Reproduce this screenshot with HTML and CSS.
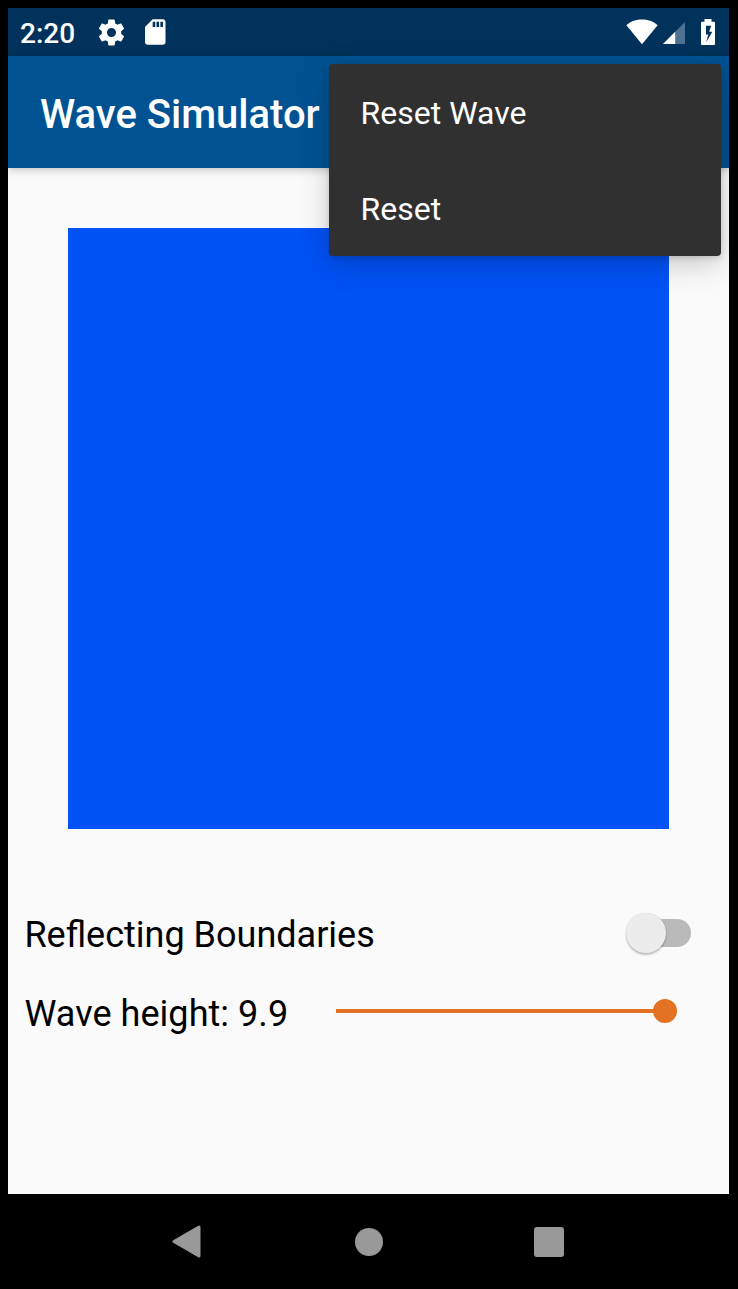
FILE: index.html
```html
<!DOCTYPE html>
<html lang="en">
<head>
<meta charset="utf-8">
<title>Wave Simulator</title>
<link rel="stylesheet" href="styles.css">
</head>
<body>
<div class="screen">
  <header class="status-bar">
    <span class="clock">2:20</span>
    <svg class="gear" viewBox="0 0 24 24"><path d="M19.43 12.98c.04-.32.07-.64.07-.98s-.03-.66-.07-.98l2.11-1.65c.19-.15.24-.42.12-.64l-2-3.46c-.12-.22-.39-.3-.61-.22l-2.49 1c-.52-.4-1.08-.73-1.69-.98l-.38-2.65C14.46 2.18 14.25 2 14 2h-4c-.25 0-.46.18-.49.42l-.38 2.65c-.61.25-1.17.59-1.69.98l-2.49-1c-.23-.09-.49 0-.61.22l-2 3.46c-.13.22-.07.49.12.64l2.11 1.65c-.04.32-.07.65-.07.98s.03.66.07.98l-2.11 1.65c-.19.15-.24.42-.12.64l2 3.46c.12.22.39.3.61.22l2.49-1c.52.4 1.08.73 1.69.98l.38 2.65c.03.24.24.42.49.42h4c.25 0 .46-.18.49-.42l.38-2.65c.61-.25 1.17-.59 1.69-.98l2.49 1c.23.09.49 0 .61-.22l2-3.46c.12-.22.07-.49-.12-.64l-2.11-1.65zM12 15.5c-1.93 0-3.5-1.57-3.5-3.5s1.57-3.5 3.5-3.5 3.5 1.57 3.5 3.5-1.57 3.5-3.5 3.5z"/></svg>
    <svg class="sd-card" viewBox="4 2 16 20"><path d="M18 2h-8L4.02 8 4 20c0 1.1.9 2 2 2h12c1.1 0 2-.9 2-2V4c0-1.1-.9-2-2-2zm-6 6h-2V4h2v4zm3 0h-2V4h2v4zm3 0h-2V4h2v4z"/></svg>
    <svg class="wifi" viewBox="0 0 32 26"><path d="M16 25.300.4 6.200C5 2 10.500.400 16 .400S27 2 31.600 6.200Z"/></svg>
    <svg class="signal" viewBox="0 0 22 22"><path class="signal-dim" d="M22 0V22H0Z"/><path d="M12.200 9.800V22H0Z"/></svg>
    <svg class="battery" viewBox="0 0 14 26"><path fill-rule="evenodd" d="M3.500 0h7v2.700h2.500Q14 2.700 14 3.700V25Q14 26 13 26H1Q0 26 0 25V3.700Q0 2.700 1 2.700H3.500ZM5 6.800V15.600H7.200L5.200 23.200 11.300 12.800H8.200L10.200 6.800Z"/></svg>
  </header>
  <div class="app-bar"><h1 class="title">Wave Simulator</h1></div>
  <main class="content">
    <div class="wave"></div>
    <div class="row row-switch">
      <span class="label label-switch">Reflecting Boundaries</span>
      <div class="switch"><div class="thumb"></div></div>
    </div>
    <div class="row row-slider">
      <span class="label label-height">Wave height: 9.9</span>
      <div class="slider"><div class="knob"></div></div>
    </div>
  </main>
  <nav class="nav-bar">
    <svg class="back" viewBox="0 0 29 33"><path d="M27 2V31L2 16.500Z"/></svg>
    <div class="home"></div>
    <div class="recent"></div>
  </nav>
  <div class="menu">
    <div class="menu-item">Reset Wave</div>
    <div class="menu-item">Reset</div>
  </div>
</div>
</body>
</html>
```
FILE: styles.css
```css
* { box-sizing: border-box; }
body {
  margin: 0;
  padding: 8px 9px 0 8px;
  height: 1289px;
  background: #000;
  font-family: Roboto, sans-serif;
  overflow: hidden;
}
.screen {
  position: relative;
  display: flex;
  flex-direction: column;
  width: 721px;
  height: 1280px;
  overflow: hidden;
}
.status-bar {
  display: flex;
  flex: none;
  align-items: flex-start;
  height: 48px;
  padding: 11px 14px 0 12px;
  background: #00325b;
  color: #fff;
}
.status-bar svg { display: block; flex: none; fill: #fff; }
.clock {
  width: 75.700px;
  margin-top: -2px;
  font-size: 28px;
  font-weight: 500;
  line-height: 33px;
}
.status-bar .gear { width: 31px; height: 31px; margin-top: -2.500px; }
.status-bar .sd-card { width: 20.500px; height: 26px; margin-left: 18.500px; }
.status-bar .wifi { width: 32px; height: 26px; margin-left: auto; }
.status-bar .signal { width: 22px; height: 22px; margin: 3px 0 0 5px; }
.status-bar .signal-dim { fill: #4d7291; }
.status-bar .battery { width: 14px; height: 26px; margin-left: 16px; }
.app-bar {
  position: relative;
  flex: none;
  display: flex;
  align-items: center;
  height: 112px;
  padding: 4px 32px 0;
  background: #005293;
  box-shadow: 0 2px 8px rgba(0, 0, 0, .22);
}
.title {
  margin: 0;
  color: #fff;
  font-size: 40px;
  font-weight: 500;
  white-space: nowrap;
}
.content {
  flex: none;
  height: 1025.500px;
  padding-top: 60px;
  background: #fafafa;
}
.wave {
  width: 601px;
  height: 601px;
  margin-left: 60px;
  background: #0052f5;
}
.row {
  display: flex;
  align-items: center;
  padding-left: 16.400px;
}
.row-switch { height: 60px; margin-top: 74px; }
.row-slider { height: 60px; margin-top: 20px; }
.label {
  color: #000;
  font-size: 36px;
  line-height: 42px;
  letter-spacing: .03px;
  font-variant-ligatures: common-ligatures;
  white-space: nowrap;
}
.label-switch { margin-top: 4px; letter-spacing: 0; }
.label-height { width: 312px; margin-top: 2px; letter-spacing: .05px; }
.switch {
  display: flex;
  align-items: center;
  width: 65px;
  height: 28px;
  margin: 0 38px 0 auto;
  border-radius: 14px;
  background: linear-gradient(90deg, transparent 20px, #b9b9b9 20px);
}
.thumb {
  width: 40px;
  height: 40px;
  border-radius: 50%;
  background: #ececec;
  box-shadow: 0 2px 2px rgba(0, 0, 0, .22), 0 0 1px rgba(0, 0, 0, .2);
}
.slider {
  display: flex;
  align-items: center;
  justify-content: flex-end;
  width: 340.600px;
  height: 4px;
  margin-bottom: 5px;
  border-radius: 0 12px 12px 0;
  background: #e37222;
}
.knob {
  flex: none;
  width: 24px;
  height: 24px;
  border-radius: 50%;
  background: #e37222;
}
.nav-bar {
  display: flex;
  align-items: center;
  flex: 1;
  padding: 2px 0 0 164px;
  background: #000;
}
.back {
  width: 29px;
  height: 33px;
  fill: #999;
  stroke: #999;
  stroke-width: 3;
  stroke-linejoin: round;
}
.home {
  width: 28px;
  height: 28px;
  margin-left: 153.500px;
  border-radius: 50%;
  background: #999;
}
.recent {
  width: 30px;
  height: 30px;
  margin-left: 151.300px;
  border-radius: 3px;
  background: #999;
}
.menu {
  position: absolute;
  top: 56px;
  right: 8px;
  width: 392.400px;
  height: 192.400px;
  border-radius: 4px;
  background: #303030;
  box-shadow: 0 8px 30px rgba(0, 0, 0, .2), 0 2px 6px rgba(0, 0, 0, .14);
}
.menu-item {
  display: flex;
  align-items: center;
  height: 96px;
  padding: 2px 32px 0;
  color: #fff;
  font-size: 32px;
}
```
